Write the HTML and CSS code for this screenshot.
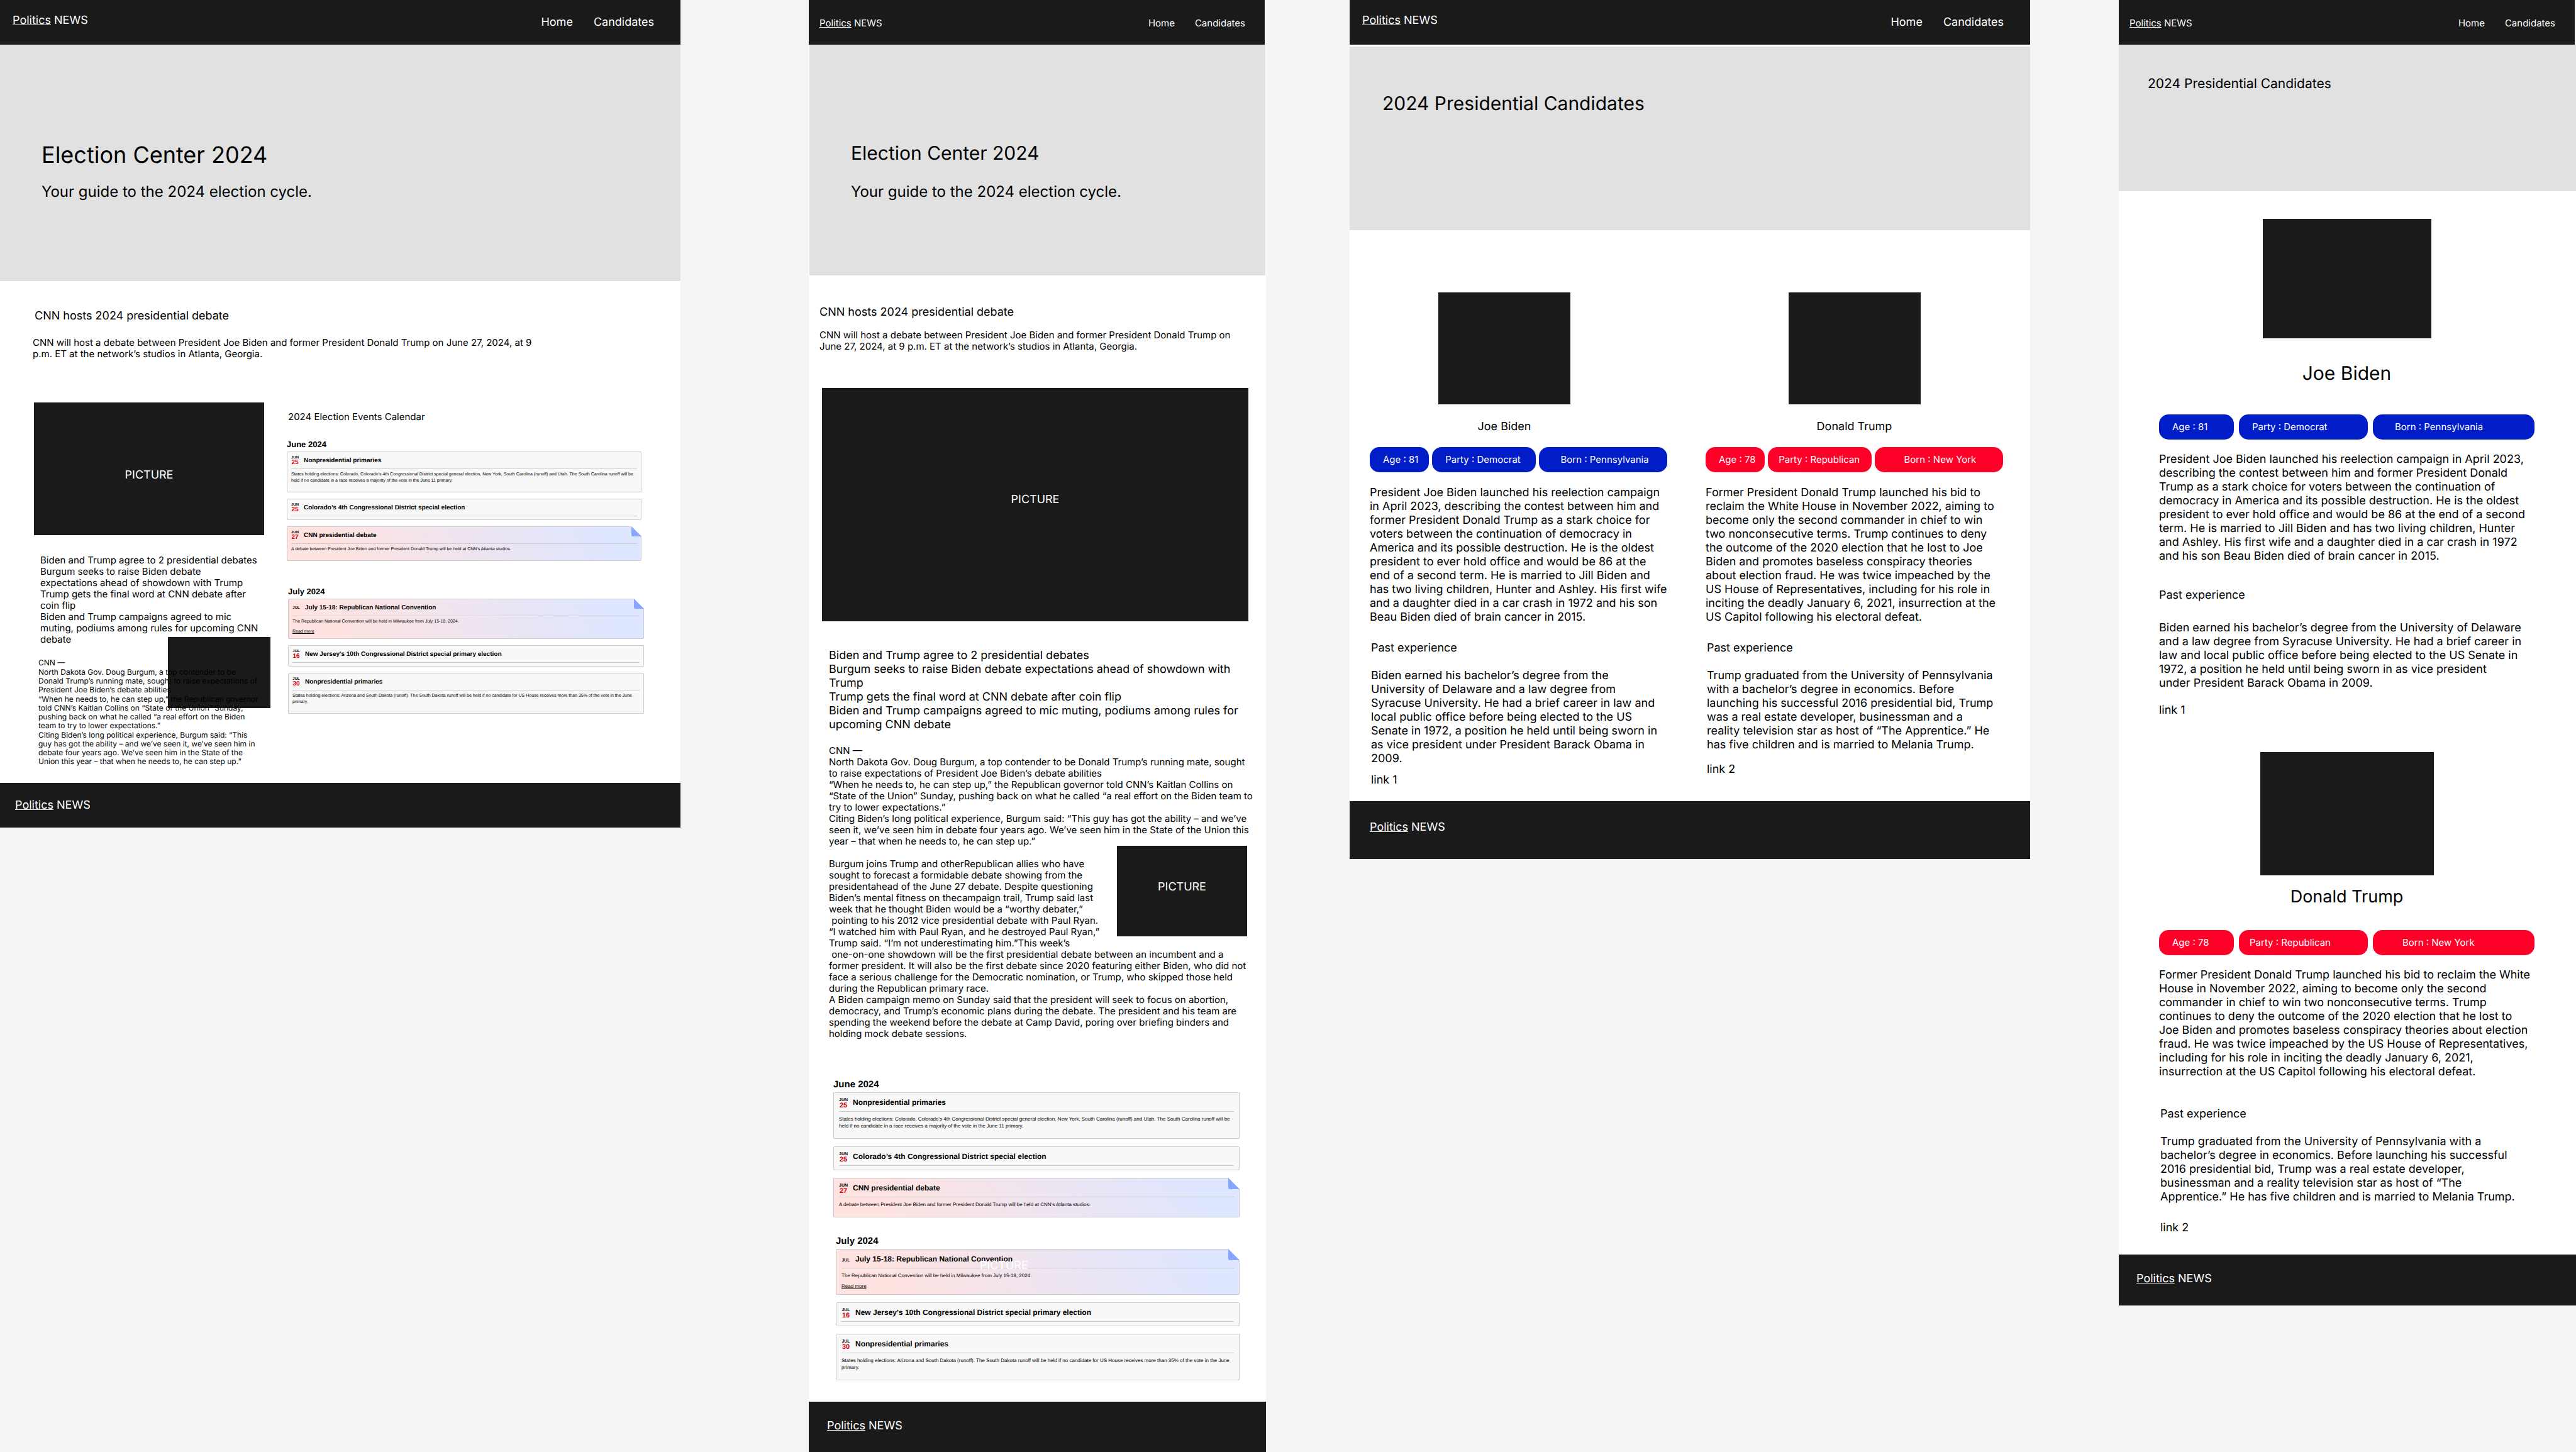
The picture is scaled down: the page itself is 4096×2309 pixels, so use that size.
FILE: index.html
```html
<!DOCTYPE html>
<html lang="en">
<head>
<meta charset="utf-8">
<meta name="viewport" content="width=device-width, initial-scale=1">
<title>Politics NEWS</title>
<link rel="stylesheet" href="styles.css">
</head>
<body>
<main class="board">

<article class="page home home-wide">
  <header class="topbar">
    <a class="logo" href="#"><u>Politics</u> NEWS</a>
    <nav class="nav"><a href="#">Home</a><a href="#">Candidates</a></nav>
  </header>
  <section class="hero">
    <h1 class="hero-title">Election Center 2024</h1>
    <p class="hero-sub">Your guide to the 2024 election cycle.</p>
  </section>
  <section class="intro">
    <h2 class="intro-title">CNN hosts 2024 presidential debate</h2>
    <p class="intro-text">CNN will host a debate between President Joe Biden and former President Donald Trump on June 27, 2024, at 9 p.m. ET at the network’s studios in Atlanta, Georgia.</p>
  </section>
  <div class="columns">
    <div class="lead">
      <div class="picture lead-picture">PICTURE</div>
      <ul class="headlines">
        <li>Biden and Trump agree to 2 presidential debates</li>
        <li>Burgum seeks to raise Biden debate expectations ahead of showdown with Trump</li>
        <li>Trump gets the final word at CNN debate after coin flip</li>
        <li>Biden and Trump campaigns agreed to mic muting, podiums among rules for upcoming CNN debate</li>
      </ul>
      <div class="story">
        <p>CNN —</p>
        <p>North Dakota Gov. Doug Burgum, a top contender to be Donald Trump’s running mate, sought to raise expectations of President Joe Biden’s debate abilities</p>
        <p>“When he needs to, he can step up,” the Republican governor told CNN’s Kaitlan Collins on “State of the Union” Sunday, pushing back on what he called “a real effort on the Biden team to try to lower expectations.”</p>
        <p>Citing Biden’s long political experience, Burgum said: “This guy has got the ability – and we’ve seen it, we’ve seen him in debate four years ago. We’ve seen him in the State of the Union this year – that when he needs to, he can step up.”</p>
      </div>
      <div class="backdrop"></div>
    </div>
    <section class="calendar">
      <h2 class="calendar-title">2024 Election Events Calendar</h2>
      <div class="month">
        <h3 class="month-name">June 2024</h3>
        <div class="events">
          <div class="event">
            <div class="event-head"><div class="date"><span class="mon">JUN</span><span class="day">25</span></div><h4 class="event-title">Nonpresidential primaries</h4></div>
            <p class="event-text">States holding elections: Colorado, Colorado’s 4th Congressional District special general election, New York, South Carolina (runoff) and Utah. The South Carolina runoff will be held if no candidate in a race receives a majority of the vote in the June 11 primary.</p>
          </div>
          <div class="event event-bare">
            <div class="event-head"><div class="date"><span class="mon">JUN</span><span class="day">25</span></div><h4 class="event-title">Colorado’s 4th Congressional District special election</h4></div>
          </div>
          <div class="event event-key">
            <svg class="fold" viewBox="0 0 16 16"><path fill="#fff" d="M0 0H16V16Z"/><path fill="#86a7fc" d="M0 0L16 16H2Q0 16 0 14Z"/></svg>
            <div class="event-head"><div class="date"><span class="mon">JUN</span><span class="day">27</span></div><h4 class="event-title">CNN presidential debate</h4></div>
            <p class="event-text">A debate between President Joe Biden and former President Donald Trump will be held at CNN’s Atlanta studios.</p>
          </div>
        </div>
      </div>
      <div class="month month-july">
        <h3 class="month-name">July 2024</h3>
        <div class="events">
          <div class="event event-key event-more">
            <svg class="fold" viewBox="0 0 16 16"><path fill="#fff" d="M0 0H16V16Z"/><path fill="#86a7fc" d="M0 0L16 16H2Q0 16 0 14Z"/></svg>
            <div class="event-head"><div class="date"><span class="mon">JUL</span></div><h4 class="event-title">July 15-18: Republican National Convention</h4></div>
            <p class="event-text">The Republican National Convention will be held in Milwaukee from July 15-18, 2024.</p>
            <a class="more" href="#">Read more</a>
          </div>
          <div class="event event-bare">
            <div class="event-head"><div class="date"><span class="mon">JUL</span><span class="day">16</span></div><h4 class="event-title">New Jersey's 10th Congressional District special primary election</h4></div>
          </div>
          <div class="event">
            <div class="event-head"><div class="date"><span class="mon">JUL</span><span class="day">30</span></div><h4 class="event-title">Nonpresidential primaries</h4></div>
            <p class="event-text">States holding elections: Arizona and South Dakota (runoff). The South Dakota runoff will be held if no candidate for US House receives more than 35% of the vote in the June primary.</p>
          </div>
        </div>
      </div>
    </section>
  </div>
  <footer class="footer"><a class="logo" href="#"><u>Politics</u> NEWS</a></footer>
</article>

<article class="page home home-narrow">
  <header class="topbar">
    <a class="logo" href="#"><u>Politics</u> NEWS</a>
    <nav class="nav"><a href="#">Home</a><a href="#">Candidates</a></nav>
  </header>
  <section class="hero">
    <h1 class="hero-title">Election Center 2024</h1>
    <p class="hero-sub">Your guide to the 2024 election cycle.</p>
  </section>
  <section class="intro">
    <h2 class="intro-title">CNN hosts 2024 presidential debate</h2>
    <p class="intro-text">CNN will host a debate between President Joe Biden and former President Donald Trump on June 27, 2024, at 9 p.m. ET at the network’s studios in Atlanta, Georgia.</p>
  </section>
  <div class="picture lead-picture">PICTURE</div>
  <ul class="headlines">
    <li>Biden and Trump agree to 2 presidential debates</li>
    <li>Burgum seeks to raise Biden debate expectations ahead of showdown with Trump</li>
    <li>Trump gets the final word at CNN debate after coin flip</li>
    <li>Biden and Trump campaigns agreed to mic muting, podiums among rules for upcoming CNN debate</li>
  </ul>
  <div class="story">
    <p>CNN —</p>
    <p>North Dakota Gov. Doug Burgum, a top contender to be Donald Trump’s running mate, sought to raise expectations of President Joe Biden’s debate abilities</p>
    <p>“When he needs to, he can step up,” the Republican governor told CNN’s Kaitlan Collins on “State of the Union” Sunday, pushing back on what he called “a real effort on the Biden team to try to lower expectations.”</p>
    <p>Citing Biden’s long political experience, Burgum said: “This guy has got the ability – and we’ve seen it, we’ve seen him in debate four years ago. We’ve seen him in the State of the Union this year – that when he needs to, he can step up.”</p>
    <div class="picture side-picture">PICTURE</div>
    <p class="story-break">Burgum joins Trump and otherRepublican allies who have sought to forecast a formidable debate showing from the presidentahead of the June 27 debate. Despite questioning Biden’s mental fitness on thecampaign trail, Trump said last week that he thought Biden would be a “worthy debater,”<br>&nbsp;pointing to his 2012 vice presidential debate with Paul Ryan. “I watched him with Paul Ryan, and he destroyed Paul Ryan,” Trump said. “I’m not underestimating him.”This week’s<br>&nbsp;one-on-one showdown will be the first presidential debate between an incumbent and a former president. It will also be the first debate since 2020 featuring either Biden, who did not face a serious challenge for the Democratic nomination, or Trump, who skipped those held during the Republican primary race.</p>
    <p>A Biden campaign memo on Sunday said that the president will seek to focus on abortion, democracy, and Trump’s economic plans during the debate. The president and his team are spending the weekend before the debate at Camp David, poring over briefing binders and holding mock debate sessions.</p>
  </div>
  <section class="calendar">
    <div class="month">
      <h3 class="month-name">June 2024</h3>
      <div class="events">
        <div class="event">
          <div class="event-head"><div class="date"><span class="mon">JUN</span><span class="day">25</span></div><h4 class="event-title">Nonpresidential primaries</h4></div>
          <p class="event-text">States holding elections: Colorado, Colorado’s 4th Congressional District special general election, New York, South Carolina (runoff) and Utah. The South Carolina runoff will be held if no candidate in a race receives a majority of the vote in the June 11 primary.</p>
        </div>
        <div class="event event-bare">
          <div class="event-head"><div class="date"><span class="mon">JUN</span><span class="day">25</span></div><h4 class="event-title">Colorado’s 4th Congressional District special election</h4></div>
        </div>
        <div class="event event-key">
          <svg class="fold" viewBox="0 0 16 16"><path fill="#fff" d="M0 0H16V16Z"/><path fill="#86a7fc" d="M0 0L16 16H2Q0 16 0 14Z"/></svg>
          <div class="event-head"><div class="date"><span class="mon">JUN</span><span class="day">27</span></div><h4 class="event-title">CNN presidential debate</h4></div>
          <p class="event-text">A debate between President Joe Biden and former President Donald Trump will be held at CNN’s Atlanta studios.</p>
        </div>
      </div>
    </div>
    <div class="month month-july">
      <h3 class="month-name">July 2024</h3>
      <div class="events">
        <div class="event event-key event-more">
          <svg class="fold" viewBox="0 0 16 16"><path fill="#fff" d="M0 0H16V16Z"/><path fill="#86a7fc" d="M0 0L16 16H2Q0 16 0 14Z"/></svg>
          <div class="event-head"><div class="date"><span class="mon">JUL</span></div><h4 class="event-title">July 15-18: Republican National Convention</h4></div>
          <p class="event-text">The Republican National Convention will be held in Milwaukee from July 15-18, 2024.</p>
          <a class="more" href="#">Read more</a>
          <span class="watermark">PICTURE</span>
        </div>
        <div class="event event-bare">
          <div class="event-head"><div class="date"><span class="mon">JUL</span><span class="day">16</span></div><h4 class="event-title">New Jersey's 10th Congressional District special primary election</h4></div>
        </div>
        <div class="event">
          <div class="event-head"><div class="date"><span class="mon">JUL</span><span class="day">30</span></div><h4 class="event-title">Nonpresidential primaries</h4></div>
          <p class="event-text">States holding elections: Arizona and South Dakota (runoff). The South Dakota runoff will be held if no candidate for US House receives more than 35% of the vote in the June primary.</p>
        </div>
      </div>
    </div>
  </section>
  <footer class="footer"><a class="logo" href="#"><u>Politics</u> NEWS</a></footer>
</article>

<article class="page candidates candidates-wide">
  <header class="topbar">
    <a class="logo" href="#"><u>Politics</u> NEWS</a>
    <nav class="nav"><a href="#">Home</a><a href="#">Candidates</a></nav>
  </header>
  <section class="hero">
    <h1 class="hero-title">2024 Presidential Candidates</h1>
  </section>
  <div class="people">
    <section class="person democrat">
      <div class="portrait-block">
        <div class="portrait"></div>
        <h2 class="name">Joe Biden</h2>
      </div>
      <ul class="pills"><li>Age : 81</li><li>Party : Democrat</li><li>Born : Pennsylvania</li></ul>
      <p class="bio">President Joe Biden launched his reelection campaign in April 2023, describing the contest between him and former President Donald Trump as a stark choice for voters between the continuation of democracy in America and its possible destruction. He is the oldest president to ever hold office and would be 86 at the end of a second term. He is married to Jill Biden and has two living children, Hunter and Ashley. His first wife and a daughter died in a car crash in 1972 and his son Beau Biden died of brain cancer in 2015.</p>
      <div class="past">
        <h3 class="past-title">Past experience</h3>
        <p class="past-text">Biden earned his bachelor’s degree from the University of Delaware and a law degree from Syracuse University. He had a brief career in law and local public office before being elected to the US Senate in 1972, a position he held until being sworn in as vice president under President Barack Obama in 2009.</p>
        <a class="source" href="#">link 1</a>
      </div>
    </section>
    <section class="person republican">
      <div class="portrait-block">
        <div class="portrait"></div>
        <h2 class="name">Donald Trump</h2>
      </div>
      <ul class="pills"><li>Age : 78</li><li>Party : Republican</li><li>Born : New York</li></ul>
      <p class="bio">Former President Donald Trump launched his bid to reclaim the White House in November 2022, aiming to become only the second commander in chief to win two nonconsecutive terms. Trump continues to deny the outcome of the 2020 election that he lost to Joe Biden and promotes baseless conspiracy theories about election fraud. He was twice impeached by the US House of Representatives, including for his role in inciting the deadly January 6, 2021, insurrection at the US Capitol following his electoral defeat.</p>
      <div class="past">
        <h3 class="past-title">Past experience</h3>
        <p class="past-text">Trump graduated from the University of Pennsylvania with a bachelor’s degree in economics. Before launching his successful 2016 presidential bid, Trump was a real estate developer, businessman and a reality television star as host of “The Apprentice.” He has five children and is married to Melania Trump.</p>
        <a class="source" href="#">link 2</a>
      </div>
    </section>
  </div>
  <footer class="footer"><a class="logo" href="#"><u>Politics</u> NEWS</a></footer>
</article>

<article class="page candidates candidates-narrow">
  <header class="topbar">
    <a class="logo" href="#"><u>Politics</u> NEWS</a>
    <nav class="nav"><a href="#">Home</a><a href="#">Candidates</a></nav>
  </header>
  <section class="hero">
    <h1 class="hero-title">2024 Presidential Candidates</h1>
  </section>
  <div class="people">
    <section class="person democrat">
      <div class="portrait-block">
        <div class="portrait"></div>
        <h2 class="name">Joe Biden</h2>
      </div>
      <ul class="pills"><li>Age : 81</li><li>Party : Democrat</li><li>Born : Pennsylvania</li></ul>
      <p class="bio">President Joe Biden launched his reelection campaign in April 2023, describing the contest between him and former President Donald Trump as a stark choice for voters between the continuation of democracy in America and its possible destruction. He is the oldest president to ever hold office and would be 86 at the end of a second term. He is married to Jill Biden and has two living children, Hunter and Ashley. His first wife and a daughter died in a car crash in 1972 and his son Beau Biden died of brain cancer in 2015.</p>
      <div class="past">
        <h3 class="past-title">Past experience</h3>
        <p class="past-text">Biden earned his bachelor’s degree from the University of Delaware and a law degree from Syracuse University. He had a brief career in law and local public office before being elected to the US Senate in 1972, a position he held until being sworn in as vice president under&nbsp;President Barack Obama in 2009.</p>
        <a class="source" href="#">link 1</a>
      </div>
    </section>
    <section class="person republican">
      <div class="portrait-block">
        <div class="portrait"></div>
        <h2 class="name">Donald Trump</h2>
      </div>
      <ul class="pills"><li>Age : 78</li><li>Party : Republican</li><li>Born : New York</li></ul>
      <p class="bio">Former President Donald Trump launched his bid to reclaim the White House in November 2022, aiming to become only the second commander in chief to win two nonconsecutive terms. Trump continues to deny the outcome of the 2020 election that he lost to Joe Biden and promotes baseless conspiracy theories about election fraud. He was twice impeached by the US House of Representatives, including for his role in inciting the deadly January 6, 2021, insurrection at the US Capitol following his electoral defeat.</p>
      <div class="past">
        <h3 class="past-title">Past experience</h3>
        <p class="past-text">Trump graduated from the University of Pennsylvania with a bachelor’s degree in economics. Before launching his successful 2016 presidential bid, Trump was a real estate developer, businessman and a reality television star as host of “The Apprentice.” He has five children and is married to Melania Trump.</p>
        <a class="source" href="#">link 2</a>
      </div>
    </section>
  </div>
  <footer class="footer"><a class="logo" href="#"><u>Politics</u> NEWS</a></footer>
</article>

</main>
</body>
</html>
```
FILE: styles.css
```css
*, *::before, *::after { box-sizing: border-box; }
body {
  margin: 0;
  background: #f5f5f5;
  color: #000;
  font: 400 18px/22px Inter, "Liberation Sans", sans-serif;
  text-rendering: geometricPrecision;
}
h1, h2, h3, h4, p, ul { margin: 0; padding: 0; font-weight: 400; }
h2, h3 { font-size: 18px; line-height: 22px; }
ul { list-style: none; }
a { color: inherit; text-decoration: none; }

/* Four page previews side by side, with proportional gutters */
.board {
  display: grid;
  grid-template-columns: 1082fr 204fr 727fr 133fr 1082fr 141fr 727fr;
  align-items: start;
}
.page { background: #fff; min-width: 0; }
.home-wide { grid-column: 1; }
.home-narrow { grid-column: 3; }
.candidates-wide { grid-column: 5; }
.candidates-narrow { grid-column: 7; }

/* Top bar and footer */
.topbar {
  display: flex;
  justify-content: space-between;
  align-items: flex-start;
  padding: 22px 42px 24px 20px;
  background: #1a1a1a;
  color: #fff;
}
.nav { display: flex; gap: 33px; padding-top: 3px; }
.home-narrow .topbar, .candidates-narrow .topbar {
  margin-right: 2px;
  padding: 28px 31px 25px 17px;
  font-size: 15px;
  line-height: 18px;
}
.home-narrow .nav, .candidates-narrow .nav { gap: 32px; padding-top: 0; }
.footer { background: #1a1a1a; color: #fff; padding: 25px 24px 24px; }
.footer .logo, .topbar .logo { display: block; }
.home-narrow .footer { padding: 28px 29px 30px; }
.candidates-wide .footer { padding: 31px 32px 39px; }
.candidates-narrow .footer { padding: 28px 28px 31px; }

/* Hero */
.hero { background: #e1e1e1; padding: 153px 66px 128px; }
.hero-title { font-size: 36px; line-height: 44px; }
.hero-sub { font-size: 24px; line-height: 29px; margin-top: 22px; }
.home-narrow .hero { margin: 0 1px; padding: 155px 66px 119px; }
.home-narrow .hero-title, .candidates-wide .hero-title { font-size: 30px; line-height: 36px; }
.home-narrow .hero-sub { margin-top: 28px; }
.candidates-wide .hero { margin-top: 3px; padding: 73px 52px 183px; }
.candidates-narrow .hero { padding: 50px 46px 157px; }
.candidates-narrow .hero-title { font-size: 21px; line-height: 26px; }

/* Home: intro */
.intro { padding: 45px 52px 0; }
.intro-title { padding-left: 3px; }
.intro-text { font-size: 15px; line-height: 18px; margin-top: 22px; max-width: 800px; }
.home-narrow .intro { padding: 48px 24px 0 17px; }
.home-narrow .intro-title { padding-left: 0; }
.home-narrow .intro-text { margin-top: 16px; }

/* Home: pictures, headlines and story */
.picture {
  display: flex;
  align-items: center;
  justify-content: center;
  background: #1a1a1a;
  color: #fff;
}
.columns {
  display: grid;
  grid-template-columns: 366fr 568fr;
  gap: 36px;
  padding: 68px 58px 27px 54px;
}
.lead { position: relative; z-index: 0; }
.lead-picture { height: 211px; padding-top: 20px; }
.headlines { font-size: 15px; line-height: 18px; margin-top: 31px; padding-left: 10px; max-width: 360px; }
.story { font-size: 12px; line-height: 14px; margin-top: 21px; padding-left: 7px; max-width: 358px; }
.home-wide .story p + p { margin-top: 1px; }
.backdrop {
  position: absolute;
  z-index: -1;
  left: 213px;
  top: 373px;
  width: 163px;
  height: 113px;
  background: #1a1a1a;
}
.home-narrow .lead-picture { height: 371px; margin: 57px 28px 0 21px; padding: 0 0 16px; }
.home-narrow .headlines { font-size: 18px; line-height: 22px; margin: 44px 18px 0 32px; padding: 0; max-width: none; }
.home-narrow .story { font-size: 15px; line-height: 18px; margin: 21px 18px 0 32px; padding: 0; max-width: none; }
.side-picture { float: right; width: 207px; height: 144px; margin: -2px 12px 0 20px; padding-bottom: 12px; font-size: 18px; }
.story-break { margin-top: 18px; }

/* Election calendar */
.calendar { font-family: "Liberation Sans", Arial, sans-serif; padding-top: 14px; }
.calendar-title { font: 400 15px/18px Inter, sans-serif; padding-left: 2px; margin-bottom: 27px; }
.month { padding-right: 4px; }
.month-july { margin-top: 41px; padding: 0 0 0 2px; }
.month-name { font-size: 13px; line-height: 16px; font-weight: 700; margin-bottom: 3px; }
.events { display: grid; gap: 10px; }
.event {
  position: relative;
  border: 1px solid #ccc;
  border-radius: 2px;
  background: #f8f8f8;
  padding: 6px 6px 12px;
}
.event-bare { padding-bottom: 5px; }
.event-key { background: linear-gradient(60deg, #ffe3e0 12%, #dfe6ff 88%); }
.event-more { padding-bottom: 5px; }
.fold { position: absolute; top: -1px; right: -1px; width: 16px; height: 16px; }
.event-head {
  display: flex;
  align-items: center;
  gap: 8px;
  min-height: 21px;
  padding-bottom: 4px;
  border-bottom: 1px solid #ccc;
}
.date { width: 12px; display: grid; font-weight: 700; text-align: center; justify-items: center; }
.mon { font-size: 6px; line-height: 6px; }
.day { font-size: 10px; line-height: 10px; color: #d9000d; }
.event-title { font-size: 10px; line-height: 12px; font-weight: 700; }
.event-text { font-size: 7px; line-height: 10px; margin: 4px -4px 0 0; }
.more { display: block; font-size: 7px; line-height: 10px; margin-top: 6px; text-decoration: underline; }

.home-narrow .calendar { padding: 63px 42px 34px 39px; }
.home-narrow .month { padding: 0; }
.home-narrow .month-july { margin-top: 29px; padding-left: 4px; }
.home-narrow .month-name { font-size: 15px; line-height: 18px; }
.home-narrow .events { gap: 12px; }
.home-narrow .event { padding: 8px 8px 14px; }
.home-narrow .event-bare { padding-bottom: 6px; }
.home-narrow .event-more { padding-bottom: 7px; }
.home-narrow .fold { width: 18px; height: 18px; }
.home-narrow .event-head { min-height: 22px; padding-bottom: 3px; }
.home-narrow .date { width: 14px; }
.home-narrow .mon { font-size: 7px; line-height: 7px; }
.home-narrow .day { font-size: 11px; line-height: 11px; }
.home-narrow .event-title { font-size: 12px; line-height: 14px; padding-bottom: 4px; }
.home-narrow .event-text { font-size: 8px; line-height: 11px; margin: 6px -6px 0 0; }
.home-narrow .more { font-size: 8px; line-height: 11px; }
.watermark { position: absolute; left: 228px; top: 15px; color: #fff; font: 400 18px/22px Inter, sans-serif; }

/* Candidates */
.people {
  display: grid;
  grid-template-columns: 1fr 1fr;
  gap: 61px;
  padding: 99px 43px 22px 32px;
}
.portrait-block { display: flex; flex-direction: column; align-items: center; }
.portrait { width: 210px; height: 178px; background: #1a1a1a; }
.name { margin-top: 25px; }
.candidates-wide .democrat .portrait-block { padding-right: 45px; }
.pills {
  display: grid;
  grid-template-columns: 94fr 164fr 204fr;
  gap: 5px;
  margin-top: 21px;
  color: #fff;
  font-size: 15px;
  line-height: 40px;
  white-space: nowrap;
}
.pills li { border-radius: 15px; padding-left: 21px; }
.pills li:last-child { padding-left: 35px; }
.democrat .pills li { background: #001dc8; }
.republican .pills li { background: #ff0029; }
.republican .pills li:nth-child(2) { padding-left: 17px; }
.republican .pills li:last-child { padding-left: 47px; }
.bio { margin-top: 22px; }
.past { padding-left: 2px; }
.past-title { margin-top: 27px; }
.past-text { margin-top: 22px; max-width: 460px; }
.source { display: block; margin-top: 12px; }
.candidates-wide .republican .source { margin-top: 17px; }

.candidates-narrow .people { grid-template-columns: 1fr; gap: 55px; padding: 44px 66px 31px 64px; }
.candidates-narrow .portrait { width: 268px; height: 190px; }
.candidates-narrow .name { font-size: 30px; line-height: 36px; margin-top: 38px; }
.candidates-narrow .pills { grid-template-columns: 119fr 205fr 257fr; gap: 8px; margin-top: 47px; }
.candidates-narrow .bio { margin-top: 21px; max-width: 592px; }
.candidates-narrow .past { padding-left: 0; }
.candidates-narrow .past-title { margin-top: 40px; }
.candidates-narrow .past-text { margin-top: 30px; max-width: 577px; }
.candidates-narrow .source { margin-top: 21px; }
.candidates-narrow .republican .portrait { width: 276px; height: 196px; }
.candidates-narrow .republican .name { font-size: 27px; line-height: 33px; margin-top: 17px; }
.candidates-narrow .republican .pills { margin-top: 37px; }
.candidates-narrow .republican .past { padding-left: 2px; }
.candidates-narrow .republican .past-title { margin-top: 45px; }
.candidates-narrow .republican .past-text { margin-top: 22px; }
.candidates-narrow .republican .source { margin-top: 27px; }
```
